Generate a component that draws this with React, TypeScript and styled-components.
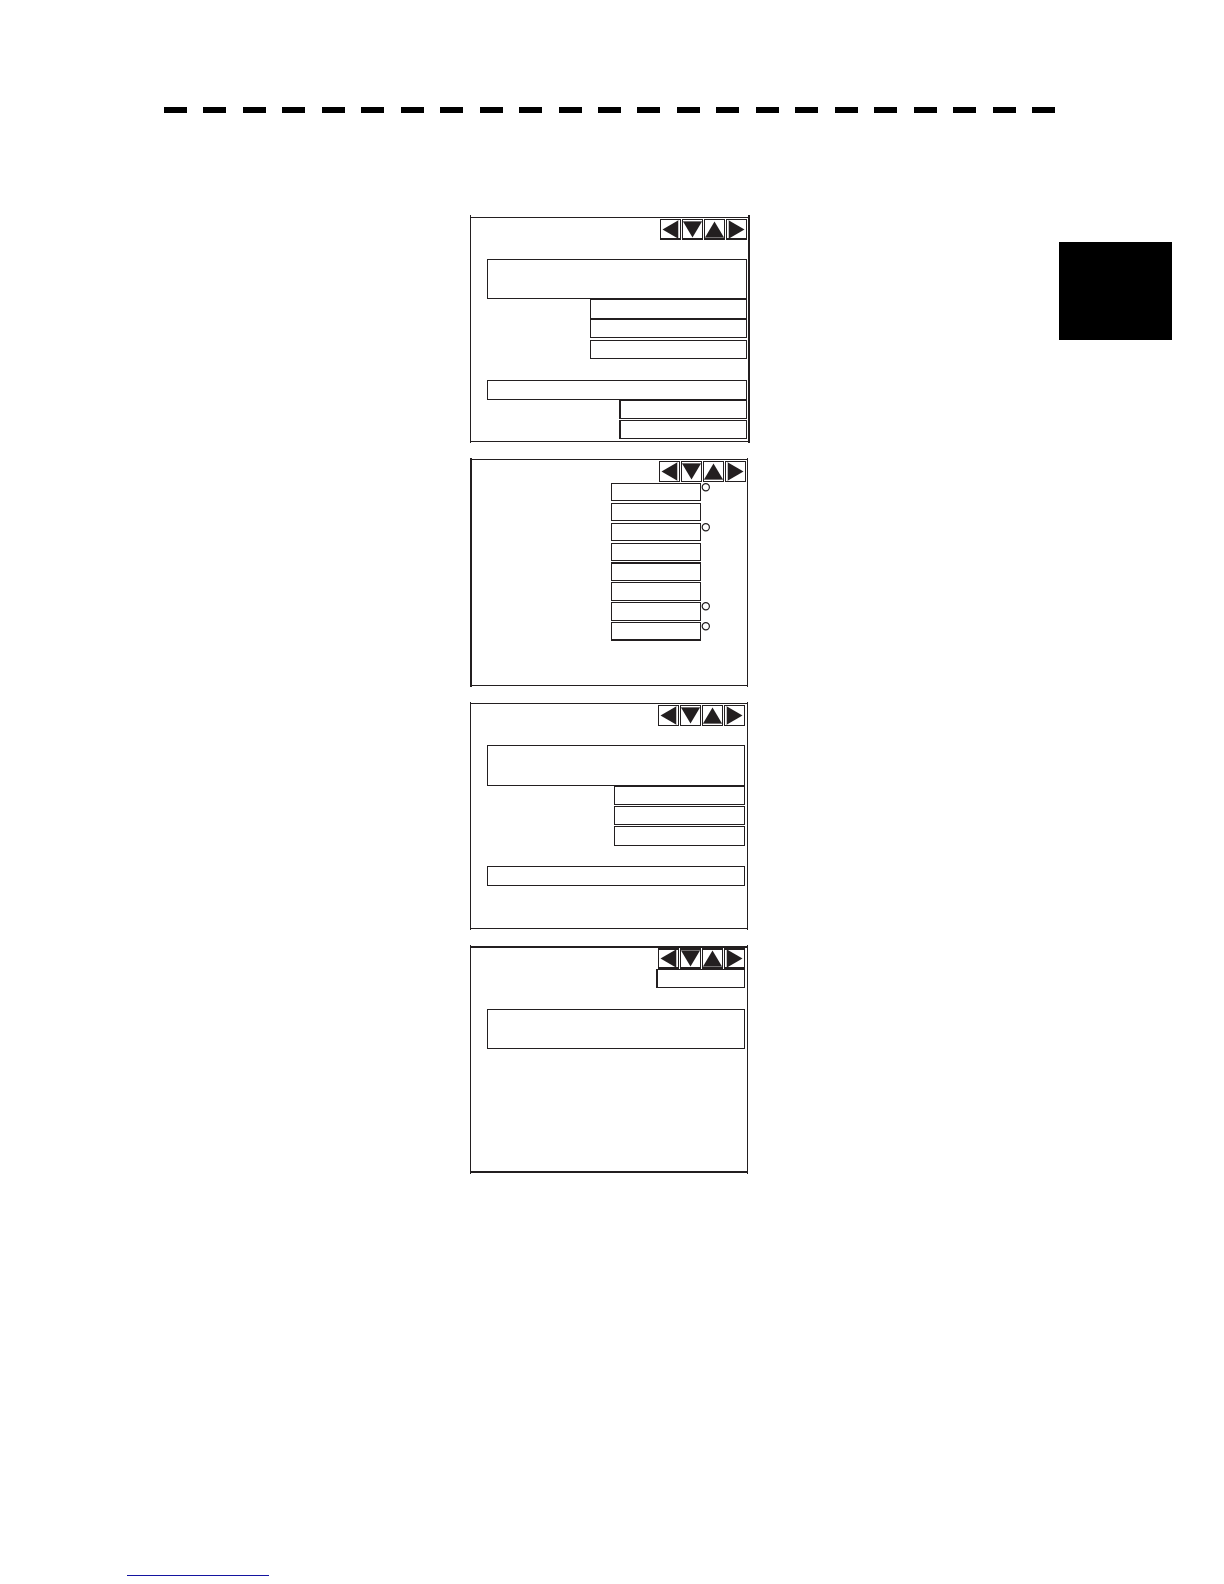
import React from "react";
import styled, { createGlobalStyle } from "styled-components";

const INK = "#231f20";

const GlobalStyle = createGlobalStyle`
  *, *::before, *::after { box-sizing: border-box; }
  body {
    margin: 0;
    background: #ffffff;
    color: ${INK};
    font-family: "Liberation Sans", Arial, sans-serif;
  }
`;

const Page = styled.div`
  display: flex;
  flex-direction: column;
  min-height: 100vh;
  padding: 107px 0 8px;
`;

const DashRule = styled.header`
  display: flex;
  justify-content: space-between;
  padding: 0 169px 0 164px;
`;

const Dash = styled.span`
  width: 23px;
  height: 6px;
  background: #000000;
`;

const Body = styled.main`
  display: grid;
  grid-template-columns: minmax(0, 1fr) 280px minmax(0, 1fr);
  align-items: start;
  margin-top: 102px;
  padding-right: 4px;
`;

const Screens = styled.div`
  grid-column: 2;
  display: flex;
  flex-direction: column;
  align-items: flex-start;
  gap: 15px;
`;

const ChapterTab = styled.aside`
  justify-self: end;
  width: 113px;
  height: 98px;
  margin: 27px 48px 0 0;
  background: #000000;
`;

const Footer = styled.footer`
  margin-top: auto;
  padding-left: 127px;
`;

const FooterLink = styled.a`
  display: block;
  width: 142px;
  height: 16px;
  border-bottom: 1px solid #1414a0;
`;

/* The side lines run slightly past the top and bottom lines. */
const Frame = styled.section<{ $wide?: boolean; $left: number; $right: number; $over: number }>`
  width: ${(p) => (p.$wide ? 280 : 278)}px;
  padding: ${(p) => p.$over}px 0 1px;
  border: solid ${INK};
  border-width: 0 ${(p) => p.$right}px 0 ${(p) => p.$left}px;
`;

const Display = styled.div<{ $line: number; $inset: number; $min: number }>`
  display: flex;
  flex-direction: column;
  align-items: flex-end;
  min-height: ${(p) => p.$min}px;
  padding: ${(p) => (p.$line > 1 ? 0 : 1)}px ${(p) => p.$inset}px 0 16px;
  border: solid ${INK};
  border-width: ${(p) => p.$line}px 0;
`;

const ArrowBar = styled.nav`
  display: flex;
  gap: 1px;
`;

const ArrowButton = styled.button<{ $top: number; $bottom: number }>`
  display: block;
  width: 21px;
  height: 21px;
  padding: 0;
  background: transparent;
  border: 1px solid ${INK};
  border-top-width: ${(p) => p.$top}px;
  border-bottom-width: ${(p) => p.$bottom}px;
  overflow: hidden;

  svg {
    display: block;
    width: 19px;
    height: 19px;
    margin-top: ${(p) => 1 - p.$top}px;
  }
`;

const Message = styled.div<{ $h: number; $gap?: number }>`
  align-self: stretch;
  height: ${(p) => p.$h}px;
  margin-top: ${(p) => p.$gap ?? 0}px;
  border: 1px solid ${INK};
`;

const Line = styled.div<{ $gap?: number }>`
  display: flex;
  align-items: flex-start;
  margin-top: ${(p) => p.$gap ?? 0}px;
`;

const Field = styled.input<{ $w: number; $h: number; $edge?: "left" | "top" | "bottom" }>`
  display: block;
  width: ${(p) => p.$w}px;
  height: ${(p) => p.$h}px;
  padding: 0 4px;
  border: 1px solid ${INK};
  ${(p) => (p.$edge ? `border-${p.$edge}-width: 2px;` : "")}
  border-radius: 0;
  outline: none;
  background: transparent;
  color: ${INK};
  font: 12px "Liberation Sans", Arial, sans-serif;
`;

const UnitSlot = styled.span`
  display: flex;
  width: 45px;
`;

const Ring = styled.svg`
  display: block;
  width: 9px;
  height: 9px;
`;

type Direction = "Left" | "Down" | "Up" | "Right";

const ARROWS: { name: Direction; points: string; base: string }[] = [
  { name: "Left", points: "1.5,9.5 17,0.5 17,18.5", base: "M17.5 0V19" },
  { name: "Down", points: "0,1.5 19,1.5 9.5,17.5", base: "M0 1.5H19" },
  { name: "Up", points: "0,17.5 19,17.5 9.5,1.5", base: "M0 17.5H19" },
  { name: "Right", points: "17.5,9.5 2,0.5 2,18.5", base: "M1.5 0V19" },
];

function Arrows({ top = 1, bottom = 1 }: { top?: number; bottom?: number }) {
  return (
    <ArrowBar>
      {ARROWS.map((arrow) => (
        <ArrowButton key={arrow.name} type="button" aria-label={arrow.name} $top={top} $bottom={bottom}>
          <svg viewBox="0 0 19 19" aria-hidden="true">
            <path d={arrow.base} stroke="#c4c2c3" strokeWidth="1" />
            <polygon points={arrow.points} fill={INK} />
          </svg>
        </ArrowButton>
      ))}
    </ArrowBar>
  );
}

type Edge = "left" | "top" | "bottom";

function Entry({ w, h = 19, gap, edge }: { w: number; h?: number; gap?: number; edge?: Edge }) {
  return (
    <Line $gap={gap}>
      <Field aria-label="Value" $w={w} $h={h} $edge={edge} />
    </Line>
  );
}

const READINGS: { h: number; gap: number; ring?: boolean; edge?: Edge }[] = [
  { h: 18, gap: 1, ring: true },
  { h: 18, gap: 2 },
  { h: 18, gap: 2, ring: true },
  { h: 18, gap: 2 },
  { h: 19, gap: 1, edge: "top" },
  { h: 19, gap: 1 },
  { h: 19, gap: 1, ring: true },
  { h: 19, gap: 1, ring: true, edge: "bottom" },
];

export default function App() {
  return (
    <>
      <GlobalStyle />
      <Page>
        <DashRule>
          {Array.from({ length: 23 }, (_, i) => (
            <Dash key={i} />
          ))}
        </DashRule>

        <Body>
          <Screens>
            <Frame $wide $left={1} $right={2} $over={2}>
              <Display $line={1} $inset={1} $min={225}>
                <Arrows bottom={2} />
                <Message $h={40} $gap={19} />
                <Entry w={157} h={20} />
                <Entry w={157} />
                <Entry w={157} gap={2} />
                <Message $h={20} $gap={21} />
                <Entry w={128} edge="left" />
                <Entry w={128} gap={1} edge="left" />
              </Display>
            </Frame>

            <Frame $left={2} $right={1} $over={1}>
              <Display $line={1} $inset={1} $min={227}>
                <Arrows />
                {READINGS.map((r, i) => (
                  <Line key={i} $gap={r.gap}>
                    <Field aria-label="Reading" $w={90} $h={r.h} $edge={r.edge} />
                    <UnitSlot>
                      {r.ring && (
                        <Ring viewBox="0 0 9 9" aria-hidden="true">
                          <circle cx="4.8" cy="4.2" r="3.6" fill="none" stroke={INK} strokeWidth="1.2" />
                        </Ring>
                      )}
                    </UnitSlot>
                  </Line>
                ))}
              </Display>
            </Frame>

            <Frame $left={1} $right={1} $over={1}>
              <Display $line={1} $inset={2} $min={226}>
                <Arrows />
                <Message $h={41} $gap={19} />
                <Entry w={131} />
                <Entry w={131} gap={1} />
                <Entry w={131} h={20} gap={1} />
                <Message $h={20} $gap={20} />
              </Display>
            </Frame>

            <Frame $left={1} $right={1} $over={1}>
              <Display $line={2} $inset={2} $min={227}>
                <Arrows top={2} bottom={2} />
                <Entry w={89} edge="left" />
                <Message $h={40} $gap={21} />
              </Display>
            </Frame>
          </Screens>

          <ChapterTab />
        </Body>

        <Footer>
          <FooterLink href="#" aria-label="Link" />
        </Footer>
      </Page>
    </>
  );
}
